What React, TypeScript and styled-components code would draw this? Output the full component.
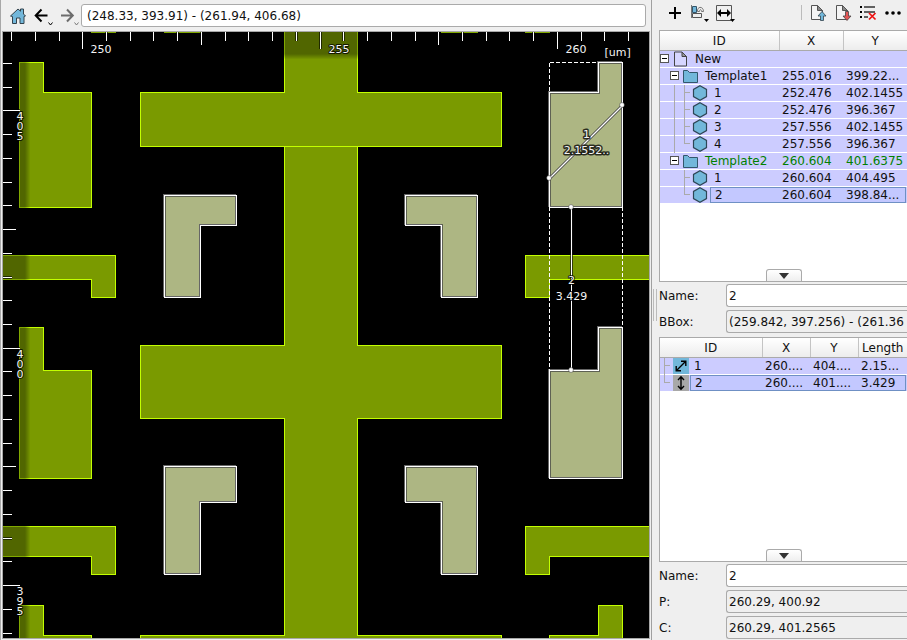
import React, { useState } from "react";
import styled, { createGlobalStyle, css } from "styled-components";

const GlobalStyle = createGlobalStyle`
  * { box-sizing: border-box; }
  html, body { margin: 0; padding: 0; }
  body {
    background: #efefef;
    color: #111;
    font-family: "DejaVu Sans", sans-serif;
    font-size: 12px;
    line-height: 16px;
  }
  button, input { font: inherit; color: inherit; margin: 0; }
`;

const Window = styled.div`
  display: flex;
  height: 100vh;
  overflow: hidden;
  border-left: 1px solid #a8a8a8;
`;

const ViewPane = styled.main`
  flex: 1 1 0;
  min-width: 0;
  display: flex;
  flex-direction: column;
  border-right: 1px solid #a0a0a0;
  padding: 0 1px 1px 1px;
`;

const NavBar = styled.div`
  display: flex;
  align-items: center;
  height: 31px;
  padding: 0 4px 0 5px;
  flex: none;
`;

const ToolButton = styled.button<{ $w?: number }>`
  display: flex;
  align-items: center;
  justify-content: center;
  flex: none;
  width: ${(p) => p.$w ?? 25}px;
  height: 26px;
  padding: 0;
  border: 0;
  background: transparent;
`;

const Address = styled.input`
  flex: 1;
  min-width: 0;
  height: 23px;
  padding: 0 5px;
  border: 1px solid #aaa;
  border-radius: 3px;
  background: #fff;
  outline: none;
`;

const CanvasFrame = styled.div`
  flex: 1;
  min-height: 0;
  overflow: hidden;
  background: #000;
  border: 1px solid #a8a8a8;
`;

const CanvasSvg = styled.svg`
  display: block;
  width: 100%;
  height: 100%;
  font-size: 11px;
`;

const Dock = styled.aside`
  flex: none;
  width: 28%;
  min-width: 255px;
  display: flex;
  overflow: hidden;
`;

const Handle = styled.div`
  flex: none;
  align-self: flex-start;
  width: 4px;
  height: 32px;
  margin: 289px 2px 0 1px;
  border: solid #bbb;
  border-width: 0 1px;
`;

const DockBody = styled.div`
  flex: 1;
  min-width: 0;
  display: flex;
  flex-direction: column;
`;

const DockTools = styled.div`
  display: flex;
  align-items: center;
  flex: none;
  height: 30px;
  padding: 0 2px 5px 3px;
`;

const Divider = styled.div`
  width: 1px;
  height: 15px;
  margin: 0 3px 0 auto;
  background: #bbb;
`;

const TreeFrame = styled.div<{ $grow?: boolean }>`
  display: flex;
  flex-direction: column;
  flex: ${(p) => (p.$grow ? "1 1 0" : "0 1 252px")};
  min-height: 0;
  background: #fff;
  border: solid #aaa;
  border-width: 1px 0 1px 1px;
`;

const Table = styled.table`
  width: 100%;
  table-layout: fixed;
  border-collapse: collapse;
  border-spacing: 0;
`;

const Head = styled.th<{ $w?: number }>`
  width: ${(p) => (p.$w ? `${p.$w}px` : "auto")};
  height: 19px;
  padding: 2px 0 0;
  font-weight: normal;
  text-align: center;
  line-height: 16px;
  background: linear-gradient(#fff, #ececec);
  border-right: 1px solid #c4c4c4;
  border-bottom: 1px solid #aaa;
  &:last-child { border-right: 0; }
`;

const Row = styled.tr<{ $green?: boolean }>`
  height: 17px;
  color: ${(p) => (p.$green ? "#007f00" : "#111")};
`;

const focusEdge = css`
  background: #c3c8ff;
  border-top: 1px solid #6f90c4;
  border-bottom: 1px solid #6f90c4;
`;

const Cell = styled.td`
  padding: 0;
  height: 17px;
  border-bottom: 1px solid #fff;
  background: #ccccff;
`;

const Value = styled.div<{ $focus?: boolean; $last?: boolean }>`
  height: 16px;
  padding-left: 3px;
  line-height: 16px;
  white-space: nowrap;
  overflow: hidden;
  border: 0 solid #6f90c4;
  ${(p) => p.$focus && focusEdge}
  ${(p) => p.$focus && "line-height: 14px;"}
  ${(p) => p.$focus && p.$last && "border-right-width: 1px; margin-right: 1px;"}
`;

const IdLine = styled.div`
  display: flex;
  height: 16px;
`;

const Label = styled.div<{ $focus?: boolean }>`
  flex: 1;
  min-width: 0;
  height: 16px;
  padding-left: 4px;
  line-height: 16px;
  white-space: nowrap;
  ${(p) => p.$focus && focusEdge}
  ${(p) => p.$focus && "line-height: 14px; border-left: 1px solid #6f90c4;"}
`;

const GuideBox = styled.span`
  flex: none;
  width: 10px;
  height: 17px;
  svg { display: block; }
`;

const Expander = styled.button`
  flex: none;
  width: 10px;
  height: 16px;
  padding: 0;
  border: 0;
  background: transparent;
  svg { display: block; }
`;

const IconSlot = styled.span<{ $w: number; $bg?: string }>`
  flex: none;
  display: flex;
  align-items: center;
  justify-content: center;
  width: ${(p) => p.$w}px;
  height: 16px;
  background: ${(p) => p.$bg ?? "transparent"};
`;

const FoldButton = styled.button`
  display: flex;
  align-items: center;
  justify-content: center;
  align-self: center;
  width: 36px;
  height: 12px;
  margin-top: auto;
  padding: 0;
  border: 1px solid #aaa;
  border-bottom: 0;
  border-radius: 3px 3px 0 0;
  background: linear-gradient(#fff, #efefef);
  flex: none;
`;

const Form = styled.form<{ $last?: boolean }>`
  display: grid;
  grid-template-columns: 67px 1fr;
  row-gap: 3px;
  align-items: center;
  flex: none;
  padding: 2px 0 ${(p) => (p.$last ? 1 : 4)}px;
`;

const Field = styled.input`
  width: 100%;
  min-width: 0;
  height: 23px;
  padding: 0 0 0 2px;
  border: 1px solid #aaa;
  border-right: 0;
  border-radius: 3px 0 0 3px;
  outline: none;
  background: #fff;
  &:read-only { background: #efefef; }
`;

/* ---------- icons ---------- */

const BLUE = "#72b7da";

const HomeIcon = () => (
  <svg width="18" height="18" viewBox="0 0 18 18">
    <path d="M1.5 9 L9 2 L11.5 4.2 V2 H14.5 V7 L16.5 9 L15 9.5 V16.5 H11 V11 H7.5 V16.5 H3.5 V9.5 Z" fill={BLUE} stroke="#33424c" strokeWidth="1" />
  </svg>
);

const Arrow = ({ back }: { back?: boolean }) => (
  <svg width="22" height="22" viewBox="0 0 22 22" fill="none">
    {back ? (
      <path d="M16.5 10.5 H5 M10.5 4.5 L4.7 10.5 L10.5 16.5" stroke="#000" strokeWidth="2" />
    ) : (
      <path d="M4 10.5 H15.5 M10 4.5 L15.8 10.5 L10 16.5" stroke="#6c6c6c" strokeWidth="2" />
    )}
    <path d="M17.5 17.5 L19.5 20 L21.5 17.5" stroke={back ? "#000" : "#777"} />
  </svg>
);

const PlusIcon = () => (
  <svg width="14" height="14" viewBox="0 0 14 14"><path d="M7 1 V13 M1 7 H13" stroke="#000" strokeWidth="2" /></svg>
);

const AlignIcon = () => (
  <svg width="20" height="18" viewBox="0 0 20 18" fill="none">
    <path d="M2.5 2.5 H6.5 V8.5 H2.5 Z" fill={BLUE} stroke="#33566b" />
    <path d="M7.5 7.5 C7 2 13.5 2 13.5 7.5 H11.5 C11.5 5 9.5 5 9.5 7.5 Z" stroke="#777" />
    <path d="M2.5 9.5 H11.5 V13.5 H2.5 Z" stroke="#555" />
    <path d="M1.5 1 V14" stroke="#777" />
    <path d="M14 15 H19 L16.5 18 Z" fill="#000" />
  </svg>
);

const WidthIcon = () => (
  <svg width="20" height="18" viewBox="0 0 20 18" fill="none">
    <path d="M1.5 1.5 H16.5 V16.5 H1.5 Z" stroke="#555" />
    <path d="M3 9 H15" stroke="#000" strokeWidth="2" />
    <path d="M2 9 L6 5 V13 Z M16 9 L12 5 V13 Z" fill="#000" />
    <path d="M15 15 H20 L17.5 18 Z" fill="#000" />
  </svg>
);

const PageArrowIcon = ({ down }: { down?: boolean }) => (
  <svg width="18" height="18" viewBox="0 0 18 18">
    <path d="M2.5 1.5 H8.5 L13.5 6.5 V15.5 H2.5 Z" fill="#f4f4f4" stroke="#555" />
    <path d="M8.5 1.5 L13.5 6.5 H8.5 Z" fill="#888" stroke="#555" />
    {down ? (
      <path d="M11.5 7.5 H14.5 V12 H17 L13 16.5 L9 12 H11.5 Z" fill="#e25555" stroke="#444" strokeWidth=".8" />
    ) : (
      <path d="M11.5 16.5 V12 H9 L13 7.5 L17 12 H14.5 V16.5 Z" fill={BLUE} stroke="#33424c" strokeWidth=".8" />
    )}
  </svg>
);

const ListClearIcon = () => (
  <svg width="18" height="18" viewBox="0 0 18 18">
    <path d="M5 3 H16 M5 8 H16 M5 13 H9" stroke="#333" strokeWidth="1.4" />
    <path d="M1 3 H3 M1 8 H3 M1 13 H3" stroke="#000" strokeWidth="2" />
    <path d="M10 9 L16.5 15.5 M16.5 9 L10 15.5" stroke="#e11" strokeWidth="1.7" />
  </svg>
);

const DotsIcon = () => (
  <svg width="18" height="6" viewBox="0 0 18 6"><circle cx="3" cy="3" r="1.8" /><circle cx="9" cy="3" r="1.8" /><circle cx="15" cy="3" r="1.8" /></svg>
);

const FileIcon = () => (
  <svg width="15" height="16" viewBox="0 0 15 16">
    <path d="M1.5 1 H9 L13.5 5.5 V15 H1.5 Z" fill="#d6d6ff" stroke="#444" />
    <path d="M9 1 L13.5 5.5 H9 Z" fill="#999" stroke="#444" />
  </svg>
);

const FolderIcon = () => (
  <svg width="17" height="16" viewBox="0 0 17 16">
    <path d="M1.5 2.5 H5.5 L7.5 4.5 H15.5 V14.5 H1.5 Z" fill={BLUE} stroke="#33566b" />
  </svg>
);

const HexIcon = () => (
  <svg width="16" height="16" viewBox="0 0 16 16">
    <path d="M8 .8 L14.5 4.4 V11.6 L8 15.2 L1.5 11.6 V4.4 Z" fill={BLUE} stroke="#2e4656" strokeWidth="1.2" />
  </svg>
);

const DiagonalIcon = () => (
  <svg width="16" height="16" viewBox="0 0 16 16" fill="none" stroke="#000" strokeWidth="1.4">
    <path d="M3.5 12.5 L12.5 3.5 M8 3.2 H12.8 V8 M3.2 8 V12.8 H8" />
  </svg>
);

const VerticalIcon = () => (
  <svg width="16" height="16" viewBox="0 0 16 16" fill="none" stroke="#000" strokeWidth="1.4">
    <path d="M8 2 V14 M5 5 L8 1.8 L11 5 M5 11 L8 14.2 L11 11" />
  </svg>
);

const FoldIcon = () => (
  <svg width="10" height="6" viewBox="0 0 10 6"><path d="M0 0 H10 L5 6 Z" fill="#333" /></svg>
);

const Guide = ({ kind }: { kind: "none" | "line" | "tee" | "end" }) => (
  <GuideBox>
    {kind !== "none" && (
      <svg width="10" height="17" shapeRendering="crispEdges" stroke="#aaa" fill="none">
        <path d={kind === "line" ? "M4.5 0 V17" : kind === "tee" ? "M4.5 0 V17 M4 7.5 H10" : "M4.5 0 V7.5 H10"} />
      </svg>
    )}
  </GuideBox>
);

const BoxIcon = () => (
  <svg width="10" height="16" shapeRendering="crispEdges" fill="none">
    <path d="M0.5 3.5 H8.5 V11.5 H0.5 Z" fill="#fff" stroke="#555" />
    <path d="M2 7.5 H7" stroke="#000" />
  </svg>
);

/* ---------- layout view ---------- */

const shapes = [
  "19,62 43,62 43,92 91,92 91,207 19,207",
  "-5,255 115,255 115,297 91,297 91,279 -5,279",
  "19,327 43,327 43,370 91,370 91,478 19,478",
  "-5,526 115,526 115,574 91,574 91,556 -5,556",
  "19,605 43,605 43,635 91,635 91,900 19,900",
  "525,255 900,255 900,279 549,279 549,297 525,297",
  "525,526 900,526 900,556 549,556 549,574 525,574",
  "549,900 549,635 598,635 598,605 622,605 622,900",
  "284,20 357,20 357,92 501,92 501,146 140,146 140,92 284,92",
  "284,146 357,146 357,345 501,345 501,418 357,418 357,635 501,635 501,900 140,900 140,635 284,635 284,418 140,418 140,345 284,345",
  "91,20 115,20 115,32 91,32",
  "164,20 200,20 200,32 164,32",
  "441,20 477,20 477,32 441,32",
  "525,20 549,20 549,32 525,32",
];

const selected = [
  "164,195 236,195 236,225 200,225 200,297 164,297",
  "405,195 477,195 477,297 441,297 441,225 405,225",
  "164,466 236,466 236,502 200,502 200,574 164,574",
  "405,466 477,466 477,574 441,574 441,502 405,502",
  "549,92 598,92 598,62 622,62 622,207 549,207",
  "549,370 598,370 598,327 622,327 622,478 549,478",
];

const topTicks = [11, 35, 59, 82, 106, 130, 153, 177, 201, 225, 248, 272, 296, 320, 343, 367, 391, 415, 438, 462, 486, 509, 533, 557, 581, 604, 628];
const leftTicks = [63, 87, 110, 134, 158, 182, 205, 229, 253, 277, 300, 324, 348, 371, 395, 419, 443, 466, 490, 514, 538, 561, 585, 609, 633];

const topLength = (i: number) => (i % 10 === 3 ? 16 : i % 10 === 8 ? 12 : 8);
const leftLength = (i: number) => (i % 10 === 2 ? 16 : i % 10 === 7 ? 12 : 8);

const CanvasText = styled.text<{ $strong?: boolean }>`
  fill: #f4f4f4;
  stroke: #000;
  stroke-opacity: 0.75;
  stroke-width: ${(p) => (p.$strong ? 3 : 2)}px;
  stroke-linejoin: round;
  paint-order: stroke;
`;

const LayoutView = () => (
  <CanvasSvg role="img" aria-label="Layout view">
    <defs>
      <linearGradient id="fadeX" x1="0" x2="1" y1="0" y2="0">
        <stop offset=".8" stopOpacity=".34" />
        <stop offset="1" stopOpacity="0" />
      </linearGradient>
      <linearGradient id="fadeY" x1="0" x2="0" y1="0" y2="1">
        <stop offset=".8" stopOpacity=".34" />
        <stop offset="1" stopOpacity="0" />
      </linearGradient>
      {selected.map((points, i) => (
        <clipPath id={`inside${i}`} key={i}><polygon points={points} /></clipPath>
      ))}
    </defs>
    <g transform="translate(-2.5 -31.5)">
      <g fill="#7a9a00" stroke="#c3ff00" shapeRendering="crispEdges">
        {shapes.map((points) => <polygon key={points} points={points} />)}
      </g>
      {selected.map((points, i) => (
        <g key={points} shapeRendering="crispEdges">
          <polygon points={points} fill="#adb683" stroke="none" />
          <polygon points={points} fill="none" stroke="#5e6153" strokeWidth="3" clipPath={`url(#inside${i})`} />
          <polygon points={points} fill="none" stroke="#666" transform="translate(-1 -1)" />
          <polygon points={points} fill="none" stroke="#fff" />
        </g>
      ))}
      <rect x="2" y="31" width="28" height="700" fill="url(#fadeX)" />
      <rect x="2" y="31" width="700" height="28" fill="url(#fadeY)" />
      <g shapeRendering="crispEdges">
        <path d="M549 62 H598 M549 62 V478 M622 62 V478" stroke="#fff" strokeDasharray="4 2" fill="none" />
        <g stroke="#000" strokeWidth="3" strokeOpacity=".6">
          {topTicks.map((x, i) => <path key={x} d={`M${x} 31 V${32 + topLength(i)}`} />)}
          {leftTicks.map((y, i) => <path key={y} d={`M2 ${y} H${3 + leftLength(i)}`} />)}
        </g>
        <g stroke="#fff">
          {topTicks.map((x, i) => <path key={x} d={`M${x} 31 V${32 + topLength(i)}`} />)}
          {leftTicks.map((y, i) => <path key={y} d={`M2 ${y} H${3 + leftLength(i)}`} />)}
        </g>
        <path d="M571 207 V279" stroke="#111" strokeWidth="3" strokeOpacity=".7" />
        <path d="M571 207 V370" stroke="#fff" />
      </g>
      <path d="M549 178 L622 105" stroke="#444" strokeWidth="3" />
      <path d="M549 178 L622 105" stroke="#fff" strokeWidth="1.2" />
      <g fill="#fff" stroke="#333" strokeWidth=".5">
        <circle cx="548.5" cy="177.5" r="2.4" /><circle cx="621.5" cy="104.5" r="2.4" />
        <circle cx="570.5" cy="206.5" r="2.4" /><circle cx="570.5" cy="369.5" r="2.4" />
      </g>
      <CanvasText x="90" y="52">250</CanvasText>
      <CanvasText x="328" y="52">255</CanvasText>
      <CanvasText x="565" y="52">260</CanvasText>
      <CanvasText x="604" y="55">[um]</CanvasText>
      {[["405", 119], ["400", 357], ["395", 594]].map(([digits, y]) =>
        String(digits).split("").map((d, i) => (
          <CanvasText key={`${y}-${i}`} x="16" y={Number(y) + i * 10}>{d}</CanvasText>
        ))
      )}
      <g textAnchor="middle">
        <CanvasText $strong x="586" y="137">1</CanvasText>
        <CanvasText $strong x="586" y="153">2.1552..</CanvasText>
        <CanvasText x="571" y="283">2</CanvasText>
        <CanvasText x="571" y="299">3.429</CanvasText>
      </g>
    </g>
  </CanvasSvg>
);

/* ---------- trees ---------- */

type Item = { id: string; x: string; y: string; end?: boolean; focus?: boolean };
type Template = { name: string; x: string; y: string; green?: boolean; items: Item[] };

const templates: Template[] = [
  {
    name: "Template1", x: "255.016", y: "399.22...",
    items: [
      { id: "1", x: "252.476", y: "402.1455" },
      { id: "2", x: "252.476", y: "396.367" },
      { id: "3", x: "257.556", y: "402.1455" },
      { id: "4", x: "257.556", y: "396.367", end: true },
    ],
  },
  {
    name: "Template2", x: "260.604", y: "401.6375", green: true,
    items: [
      { id: "1", x: "260.604", y: "404.495" },
      { id: "2", x: "260.604", y: "398.84...", end: true, focus: true },
    ],
  },
];

const ShapeTree = () => {
  const [closed, setClosed] = useState<string[]>([]);
  const toggle = (name: string) =>
    setClosed((c) => (c.includes(name) ? c.filter((n) => n !== name) : [...c, name]));
  return (
    <Table>
      <thead><tr><Head $w={119}>ID</Head><Head $w={64}>X</Head><Head>Y</Head></tr></thead>
      <tbody>
        <Row>
          <Cell colSpan={3}>
            <IdLine>
              <Expander type="button" aria-label="Toggle New" onClick={() => toggle("New")}><BoxIcon /></Expander>
              <IconSlot $w={21}><FileIcon /></IconSlot>
              <Label>New</Label>
            </IdLine>
          </Cell>
        </Row>
        {!closed.includes("New") && templates.map((t, ti) => (
          <React.Fragment key={t.name}>
            <Row $green={t.green}>
              <Cell>
                <IdLine>
                  <Guide kind="none" />
                  <Expander type="button" aria-label={`Toggle ${t.name}`} onClick={() => toggle(t.name)}><BoxIcon /></Expander>
                  <IconSlot $w={21}><FolderIcon /></IconSlot>
                  <Label>{t.name}</Label>
                </IdLine>
              </Cell>
              <Cell><Value>{t.x}</Value></Cell>
              <Cell><Value>{t.y}</Value></Cell>
            </Row>
            {!closed.includes(t.name) && t.items.map((s) => (
              <Row key={s.id}>
                <Cell>
                  <IdLine>
                    <Guide kind="none" />
                    <Guide kind={ti === 0 ? "line" : "none"} />
                    <Guide kind={s.end ? "end" : "tee"} />
                    <IconSlot $w={20}><HexIcon /></IconSlot>
                    <Label $focus={s.focus}>{s.id}</Label>
                  </IdLine>
                </Cell>
                <Cell><Value $focus={s.focus}>{s.x}</Value></Cell>
                <Cell><Value $focus={s.focus} $last>{s.y}</Value></Cell>
              </Row>
            ))}
          </React.Fragment>
        ))}
      </tbody>
    </Table>
  );
};

const rulers = [
  { id: "1", x: "260....", y: "404....", length: "2.15...", bg: BLUE, icon: <DiagonalIcon />, focus: false },
  { id: "2", x: "260....", y: "401....", length: "3.429", bg: "#a8a8a8", icon: <VerticalIcon />, focus: true },
];

const RulerTable = () => (
  <Table>
    <thead><tr><Head $w={102}>ID</Head><Head $w={48}>X</Head><Head $w={48}>Y</Head><Head>Length</Head></tr></thead>
    <tbody>
      {rulers.map((r) => (
        <Row key={r.id}>
          <Cell>
            <IdLine>
              <Guide kind={r.focus ? "end" : "tee"} />
              <IconSlot $w={3} />
              <IconSlot $w={16} $bg={r.bg}>{r.icon}</IconSlot>
              <IconSlot $w={1} />
              <Label $focus={r.focus}>{r.id}</Label>
            </IdLine>
          </Cell>
          <Cell><Value $focus={r.focus}>{r.x}</Value></Cell>
          <Cell><Value $focus={r.focus}>{r.y}</Value></Cell>
          <Cell><Value $focus={r.focus} $last>{r.length}</Value></Cell>
        </Row>
      ))}
    </tbody>
  </Table>
);

export default function App() {
  return (
    <>
      <GlobalStyle />
      <Window>
        <ViewPane>
          <NavBar>
            <ToolButton $w={22} aria-label="Home"><HomeIcon /></ToolButton>
            <ToolButton $w={26} aria-label="Back"><Arrow back /></ToolButton>
            <ToolButton $w={26} aria-label="Forward"><Arrow /></ToolButton>
            <Address aria-label="Viewport" defaultValue="(248.33, 393.91) - (261.94, 406.68)" />
          </NavBar>
          <CanvasFrame><LayoutView /></CanvasFrame>
        </ViewPane>
        <Dock>
          <Handle />
          <DockBody>
            <DockTools>
              <ToolButton aria-label="Add"><PlusIcon /></ToolButton>
              <ToolButton aria-label="Align"><AlignIcon /></ToolButton>
              <ToolButton aria-label="Measure"><WidthIcon /></ToolButton>
              <Divider />
              <ToolButton aria-label="Import"><PageArrowIcon /></ToolButton>
              <ToolButton aria-label="Export"><PageArrowIcon down /></ToolButton>
              <ToolButton aria-label="Clear list"><ListClearIcon /></ToolButton>
              <ToolButton aria-label="More"><DotsIcon /></ToolButton>
            </DockTools>
            <TreeFrame>
              <ShapeTree />
              <FoldButton aria-label="Collapse shape details"><FoldIcon /></FoldButton>
            </TreeFrame>
            <Form>
              <label htmlFor="shape-name">Name:</label>
              <Field id="shape-name" defaultValue="2" />
              <label htmlFor="shape-bbox">BBox:</label>
              <Field id="shape-bbox" readOnly value="(259.842, 397.256) - (261.36" />
            </Form>
            <TreeFrame $grow>
              <RulerTable />
              <FoldButton aria-label="Collapse ruler details"><FoldIcon /></FoldButton>
            </TreeFrame>
            <Form $last>
              <label htmlFor="ruler-name">Name:</label>
              <Field id="ruler-name" defaultValue="2" />
              <label htmlFor="ruler-p">P:</label>
              <Field id="ruler-p" readOnly value="260.29, 400.92" />
              <label htmlFor="ruler-c">C:</label>
              <Field id="ruler-c" readOnly value="260.29, 401.2565" />
            </Form>
          </DockBody>
        </Dock>
      </Window>
    </>
  );
}
